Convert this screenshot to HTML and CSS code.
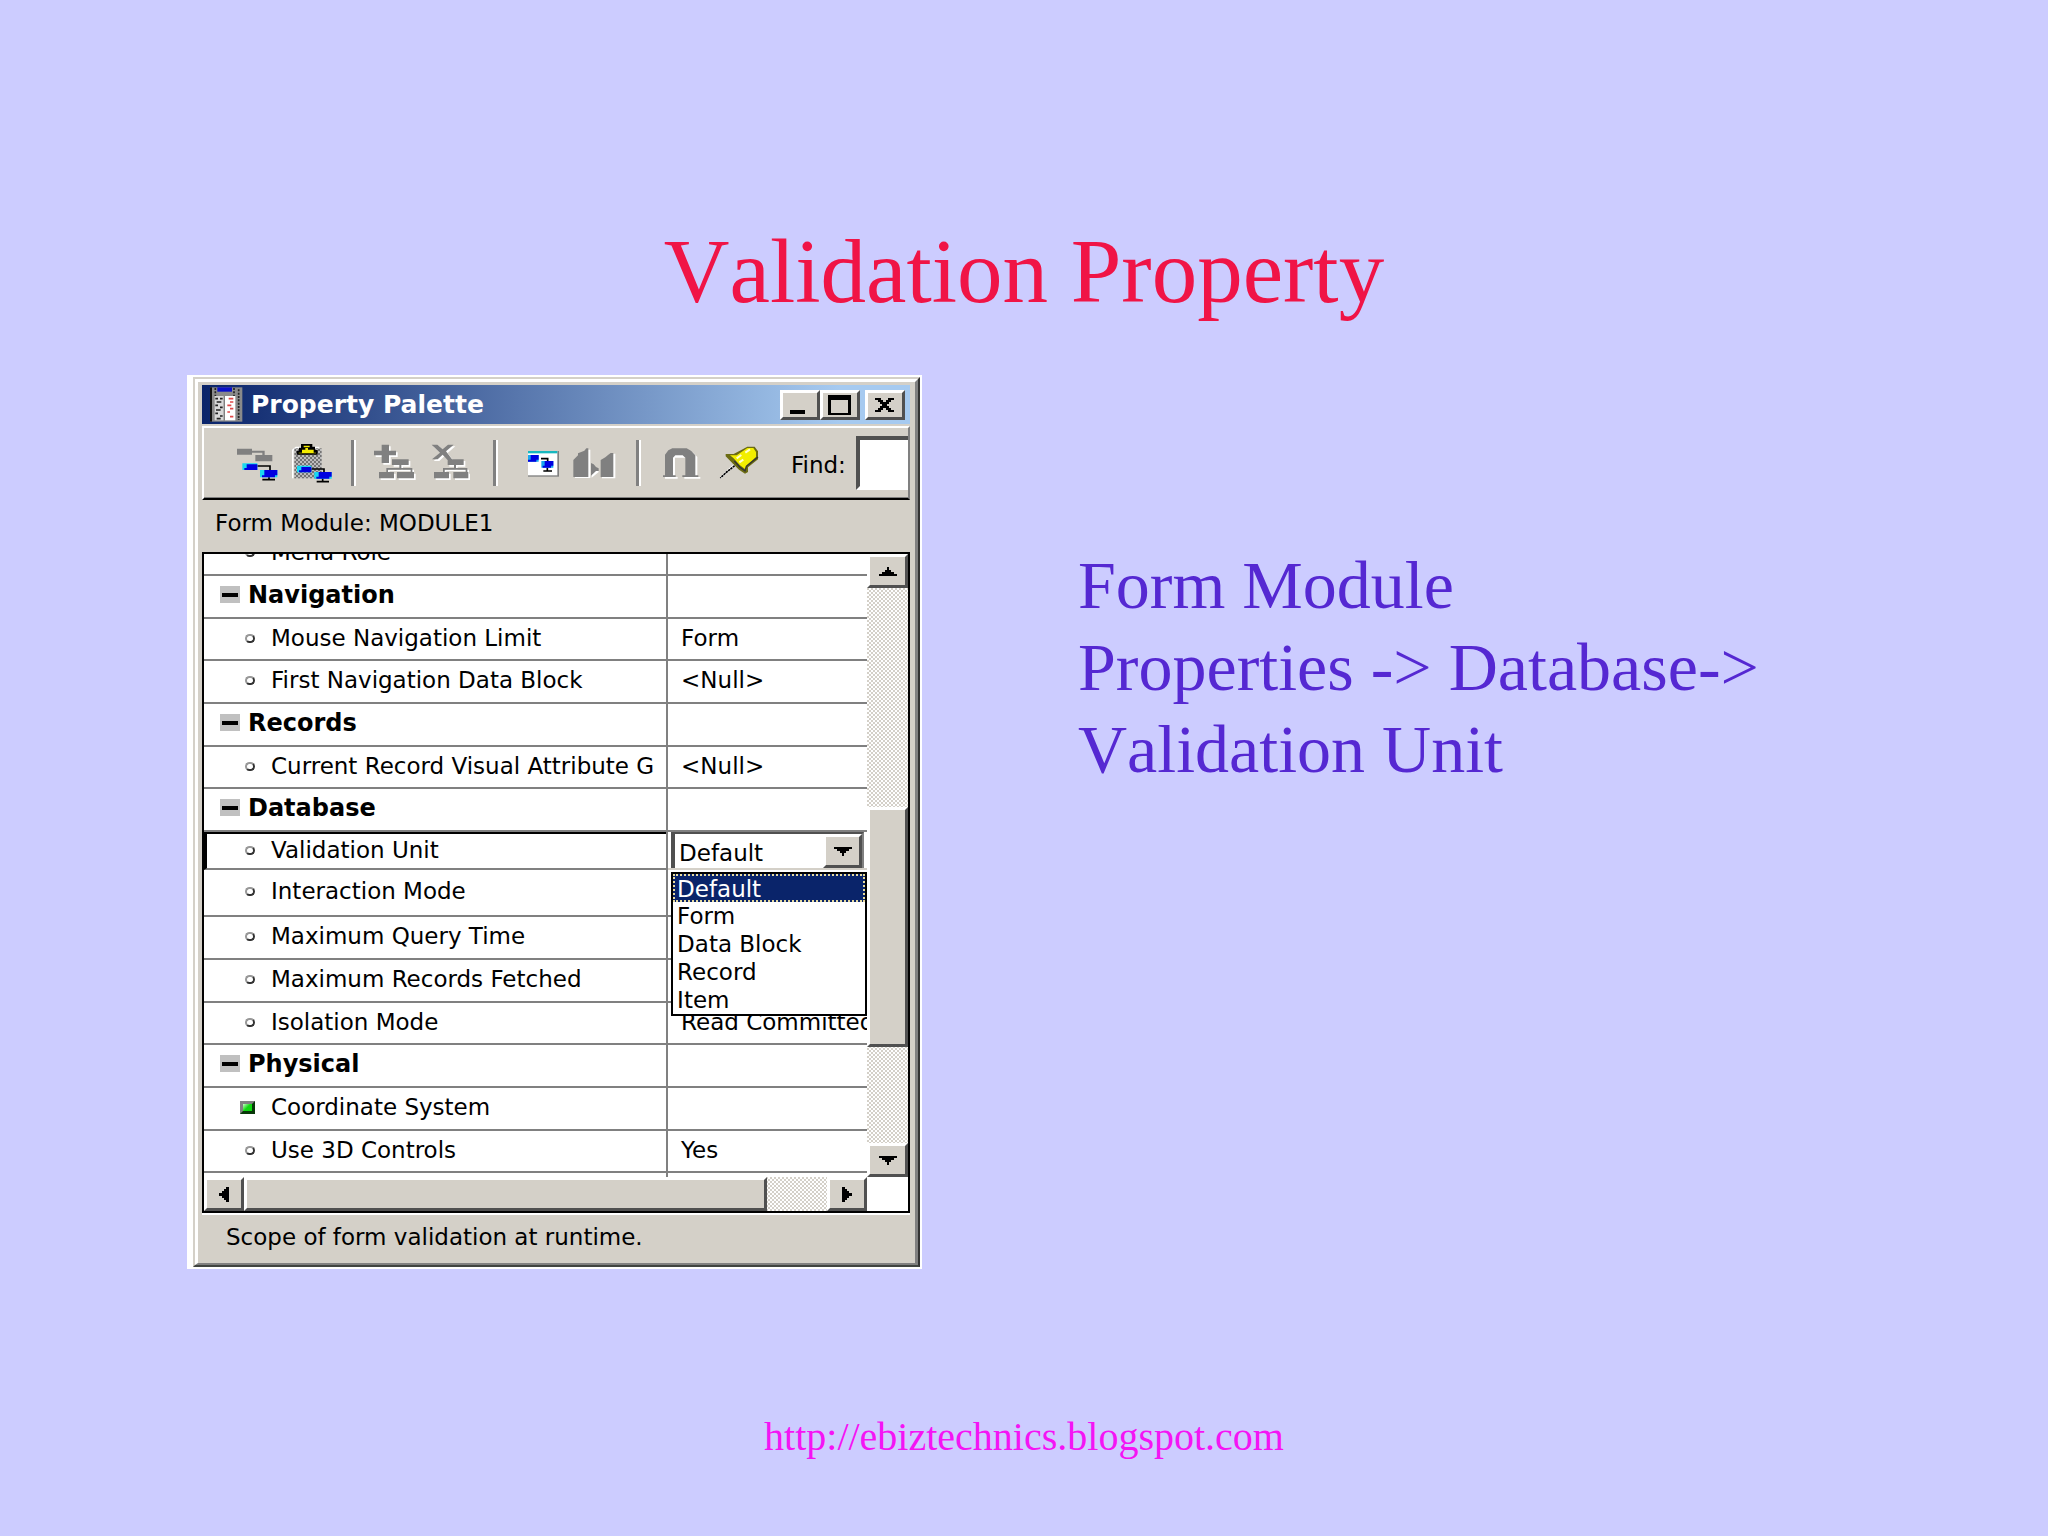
FILE: index.html
```html
<!DOCTYPE html>
<html lang="en">
<head>
<meta charset="utf-8">
<title>Validation Property</title>
<link rel="stylesheet" href="styles.css">
</head>
<body>
<div class="slide">
  <h1 class="slide-title">Validation Property</h1>

  <main class="slide-body">
    <section class="window" aria-label="Property Palette">
      <div class="frame">
        <div class="frame-inner">
          <header class="titlebar">
            <svg class="app-icon" width="33" height="35" viewBox="90 53 99 105" aria-hidden="true">
              <rect x="90" y="54" width="97" height="103" fill="#8a8a8a"/>
              <rect x="90" y="54" width="6" height="103" fill="#111"/>
              <rect x="112" y="54" width="44" height="13" fill="#0a10c8"/>
              <path d="M106 56v24M162 56v24M176 60v92" stroke="#222" stroke-width="5" stroke-dasharray="6 4"/>
              <rect x="104" y="80" width="27" height="73" fill="#d8d8d8"/>
              <rect x="134" y="80" width="32" height="73" fill="#fff"/>
              <path d="M106 88h8M120 88h8M110 98h14M106 108h8M120 114h8M108 122h14M106 132h8M120 140h8M110 148h12" stroke="#222" stroke-width="5"/>
              <path d="M146 88h14M150 98h10M142 108h12M150 118h10M142 128h8M150 142h10" stroke="#e04848" stroke-width="5"/>
              <path d="M133 80v73" stroke="#777" stroke-width="3"/>
            </svg>
            <h2 class="window-title">Property Palette</h2>
            <div class="window-buttons">
              <button class="win-btn" aria-label="Minimize"><svg width="30" height="20" viewBox="0 0 30 20"><path d="M5 15h15v4H5z"/></svg></button>
              <button class="win-btn" aria-label="Maximize"><svg width="30" height="20" viewBox="0 0 30 20"><path fill-rule="evenodd" d="M3 0h23v20H3zM6 5v13h17V5z"/></svg></button>
              <button class="win-btn win-close" aria-label="Close"><svg width="30" height="20" viewBox="0 0 30 20"><path d="M5 3h6v2h2v2h3V5h2V3h6v2h-3v2h-2v2h-2v2h2v2h2v2h3v2h-6v-2h-2v-2h-3v2h-2v2H5v-2h3v-2h2v-2h2V9h-2V7H8V5H5z"/></svg></button>
            </div>
          </header>

          <div class="toolbar" role="toolbar" aria-label="Properties">
            <button class="tool" aria-label="Copy properties">
              <svg width="42" height="46" viewBox="168 207 126 138">
                <path d="M171 233h45v6h38v13h23v19h-51v-19h21v-7h-31v6h-45z" fill="#808080"/>
                <path d="M232 285h38v13M267 318v8M247 326h38" stroke="#000" stroke-width="5" fill="none"/>
                <path d="M187 277h45v20h-45zM240 297h52v22h-52z" fill="#19d8f0"/>
                <path d="M200 280h32v17h-39v-6h7zM253 297h39v16h-7v6h-39v-6h7z" fill="#0000e0"/>
              </svg>
            </button>
            <button class="tool" aria-label="Paste properties">
              <svg width="41" height="46" viewBox="336 207 123 138">
                <defs><pattern id="board" width="12" height="12" patternUnits="userSpaceOnUse"><rect width="12" height="12" fill="#bcbcbc"/><path d="M0 0h6v6H0zM6 6h6v6H6z" fill="#747474"/></pattern></defs>
                <path d="M338 322v-84l10-8h70" stroke="#fff" stroke-width="5" fill="none"/>
                <rect x="343" y="232" width="82" height="90" fill="url(#board)"/>
                <path d="M363 219h34v8h8v10h8v14h-63v-12h7v-9h6z" fill="#000"/>
                <path d="M371 224h18v5h-18zM366 236h10v-5h8v5h17v9h7v2h-52v-2h10z" fill="#f4ec00"/>
                <path d="M394 294h38v10M428 322v10M410 332h37" stroke="#000" stroke-width="5" fill="none"/>
                <path d="M351 284h43v20h-43zM403 303h52v20h-52z" fill="#19d8f0"/>
                <path d="M364 288h30v16h-37v-6h7zM416 303h39v14h-7v6h-39v-6h7z" fill="#0000e0"/>
              </svg>
            </button>
            <span class="separator"></span>
            <button class="tool" aria-label="Add property">
              <svg width="43" height="46" viewBox="582 207 129 138">
                <path transform="translate(5 5)" fill="#fff" d="M605 221h22v18h21v14h-21v23h-22v-23h-23v-14h23zM636 265h50v17h-50zM658 282h6v9h33v12h-5v-7h-68v7h-5v-12h39zM597 303h45v19h-45zM651 303h51v19h-51z"/>
                <path fill="#808080" d="M605 221h22v18h21v14h-21v23h-22v-23h-23v-14h23zM636 265h50v17h-50zM658 282h6v9h33v12h-5v-7h-68v7h-5v-12h39zM597 303h45v19h-45zM651 303h51v19h-51z"/>
              </svg>
            </button>
            <button class="tool" aria-label="Delete property">
              <svg width="44" height="46" viewBox="753 207 132 138">
                <path transform="translate(5 5)" fill="#fff" d="M755 221h17l16 14 16-14h17l-23 20 18 24h35v17h-48v-14l-15-17-15 14h-17l24-20zM822 282h6v9h34v12h-5v-7h-63v7h-5v-12h33zM762 303h45v19h-45zM820 303h45v19h-45z"/>
                <path fill="#808080" d="M755 221h17l16 14 16-14h17l-23 20 18 24h35v17h-48v-14l-15-17-15 14h-17l24-20zM822 282h6v9h34v12h-5v-7h-63v7h-5v-12h33zM762 303h45v19h-45zM820 303h45v19h-45z"/>
              </svg>
            </button>
            <span class="separator"></span>
            <button class="tool" aria-label="Property palette view">
              <svg width="43" height="46" viewBox="1008 207 129 138">
                <rect x="1044" y="240" width="93" height="77" fill="#808080"/>
                <rect x="1044" y="240" width="88" height="73" fill="#fff"/>
                <rect x="1044" y="240" width="88" height="7" fill="#17b8c0"/>
                <path d="M1083 263h20v10M1102 290v10M1090 300h26" stroke="#000" stroke-width="5" fill="none"/>
                <path d="M1044 252h32v20h-32zM1084 270h36v20h-36z" fill="#19a8f0"/>
                <path d="M1052 252h24v14h-7v6h-25v-6h8zM1094 270h26v14h-7v6h-25v-6h6z" fill="#0000e0"/>
              </svg>
            </button>
            <button class="tool" aria-label="Intersection">
              <svg width="45" height="46" viewBox="69 207 135 138">
                <path fill="#fff" d="M75 270l39-34h7v85H75zM155 270l32-22h9v74h-40zM125 288l22 14-22 18z"/>
                <path fill="#808080" d="M70 267l14-14v-6l19-8 6-7h6v86H70zM152 267l14-8 8-7 8-6h8v72h-38zM123 276l8 4 7 8 8 4v8h-8l-15 14z"/>
              </svg>
            </button>
            <span class="separator"></span>
            <button class="tool" aria-label="Freeze">
              <svg width="43" height="46" viewBox="327 207 129 138">
                <path transform="translate(6 5)" fill="#fff" d="M339 313h6v-62l10-13 12-6h43l14 8 12 13v60h9v5h-48v-5h9v-58h-37v58h8v5h-38z"/>
                <path fill="#808080" d="M339 313h6v-62l10-13 12-6h43l14 8 12 13v60h9v5h-48v-5h9v-53l-8-7h-22l-7 7v53h8v5h-38z"/>
              </svg>
            </button>
            <button class="tool" aria-label="Pin palette">
              <svg width="43" height="46" viewBox="498 207 129 138">
                <path d="M556 280l-24 21-20 20" stroke="#fff" stroke-width="7"/>
                <path d="M554 284l-24 19-19 18" stroke="#000" stroke-width="5" stroke-dasharray="7 2"/>
                <path d="M578 235l14-8h22l10 14v24l-30 24v14l-9 5-18-12-18-18-22-22v-7h24z" fill="#6b6b12"/>
                <path d="M580 239l12-8h18l8 12v15l-28 25-4 12-16-12-20-22-10-8h20z" fill="#f2ee00"/>
                <path d="M586 245l14-10M560 262l14-10M568 274l12-8" stroke="#ffffd0" stroke-width="6"/>
                <path d="M553 270l16 18 16 12 4-14 35-28" stroke="#333" stroke-width="4" fill="none"/>
              </svg>
            </button>
            <label class="find-label" for="find">Find:</label>
            <input class="find-input" id="find" type="text">
          </div>

          <p class="context">Form Module: MODULE1</p>

          <div class="grid">
            <div class="viewport">
              <table class="properties">
                <colgroup><col class="col-name"><col></colgroup>
                <tbody>
                  <tr><th scope="row"><i class="dot"></i>Menu Role</th><td></td></tr>
                  <tr class="group"><th scope="row"><i class="minus"></i>Navigation</th><td></td></tr>
                  <tr><th scope="row"><i class="dot"></i>Mouse Navigation Limit</th><td>Form</td></tr>
                  <tr><th scope="row"><i class="dot"></i>First Navigation Data Block</th><td>&lt;Null&gt;</td></tr>
                  <tr class="group"><th scope="row"><i class="minus"></i>Records</th><td></td></tr>
                  <tr><th scope="row"><i class="dot"></i>Current Record Visual Attribute G</th><td>&lt;Null&gt;</td></tr>
                  <tr class="group"><th scope="row"><i class="minus"></i>Database</th><td></td></tr>
                  <tr class="editing">
                    <th scope="row"><i class="dot"></i><label for="unit">Validation Unit</label></th>
                    <td>
                      <div class="combo">
                        <select class="combo-value" id="unit"><option>Default</option></select>
                        <span class="combo-arrow"><svg width="18" height="9" viewBox="0 0 18 9"><path d="M0 0h18v2h-3v2h-3v2h-2v3H8V6H6V4H3V2H0z"/></svg></span>
                        <select class="combo-list" size="5" aria-label="Validation Unit choices">
                          <option selected>Default</option>
                          <option>Form</option>
                          <option>Data Block</option>
                          <option>Record</option>
                          <option>Item</option>
                        </select>
                      </div>
                    </td>
                  </tr>
                  <tr class="after-editing"><th scope="row"><i class="dot"></i>Interaction Mode</th><td></td></tr>
                  <tr><th scope="row"><i class="dot"></i>Maximum Query Time</th><td></td></tr>
                  <tr><th scope="row"><i class="dot"></i>Maximum Records Fetched</th><td></td></tr>
                  <tr><th scope="row"><i class="dot"></i>Isolation Mode</th><td>Read Committed</td></tr>
                  <tr class="group"><th scope="row"><i class="minus"></i>Physical</th><td></td></tr>
                  <tr><th scope="row"><i class="square"></i>Coordinate System</th><td></td></tr>
                  <tr><th scope="row"><i class="dot"></i>Use 3D Controls</th><td>Yes</td></tr>
                  <tr class="cut"><th></th><td></td></tr>
                </tbody>
              </table>
            </div>
            <div class="scroll scroll-v">
              <button class="scroll-btn" aria-label="Scroll up"><svg width="18" height="9" viewBox="0 0 18 9"><path d="M0 9h18V7h-3V5h-3V3h-2V0H8v3H6v2H3v2H0z"/></svg></button>
              <div class="track-above"></div>
              <div class="thumb"></div>
              <div class="track-below"></div>
              <button class="scroll-btn" aria-label="Scroll down"><svg width="18" height="9" viewBox="0 0 18 9"><path d="M0 0h18v2h-3v2h-3v2h-2v3H8V6H6V4H3V2H0z"/></svg></button>
            </div>
            <div class="scroll scroll-h">
              <button class="scroll-btn" aria-label="Scroll left"><svg width="10" height="15" viewBox="0 0 10 15"><path d="M10 0v15H7v-2H5v-2H3V9H0V6h3V4h2V2h2V0z"/></svg></button>
              <div class="thumb"></div>
              <div class="track-after"></div>
              <button class="scroll-btn" aria-label="Scroll right"><svg width="10" height="15" viewBox="0 0 10 15"><path d="M0 0v15h3v-2h2v-2h2V9h3V6H7V4H5V2H3V0z"/></svg></button>
            </div>
          </div>

          <p class="status">Scope of form validation at runtime.</p>
        </div>
      </div>
    </section>

    <p class="caption">Form Module<br>Properties -&gt; Database-&gt;<br>Validation Unit</p>
  </main>

  <footer class="slide-footer"><a href="http://ebiztechnics.blogspot.com">http://ebiztechnics.blogspot.com</a></footer>
</div>
</body>
</html>
```
FILE: styles.css
```css
* { box-sizing: border-box; }

body {
  margin: 0;
  background: #ccccff;
  font-family: "Liberation Serif", "Times New Roman", serif;
}

h1, h2, p { margin: 0; font-weight: normal; }

button, input, select {
  margin: 0;
  padding: 0;
  border: 0;
  border-radius: 0;
  color: #000;
  font: inherit;
}

svg { display: block; }

/* Slide */
.slide {
  display: flex;
  flex-direction: column;
  min-height: 100vh;
  padding: 220px 0 76px;
}

.slide-title {
  color: #f01446;
  font-size: 91px;
  line-height: 104px;
  text-align: center;
  font-kerning: none;
}

.slide-body {
  display: grid;
  grid-template-columns: minmax(0, 735fr) minmax(0, 783fr);
  gap: 156px;
  align-items: start;
  padding: 51px 187px 0;
}

.caption {
  padding-top: 169px;
  color: #5528d2;
  font-size: 68px;
  line-height: 82px;
  font-kerning: none;
}

.slide-footer {
  margin-top: auto;
  font-size: 40px;
  line-height: 46px;
  text-align: center;
}

.slide-footer a { color: #f414f4; text-decoration: none; }

/* Window frame */
.window {
  padding: 2px 2px 2px 6px;
  background: #fff;
  font-family: "DejaVu Sans", Verdana, sans-serif;
  font-size: 23px;
  line-height: 28px;
  color: #000;
}

.frame {
  border: 2px solid;
  border-color: #d4d0c8 #333 #404440 #d4d0c8;
}

.frame-inner {
  padding: 3px 5px 1px 4px;
  border: 3px solid;
  border-bottom-width: 2px;
  border-color: #fff #808080 #808080 #fff;
  background: #d4d0c8;
}

.titlebar {
  display: flex;
  align-items: center;
  height: 39px;
  padding: 0 5px 0 8px;
  background: linear-gradient(90deg, #0a246a, #a6caf0 90%);
}

.window-title {
  flex: 1;
  margin-left: 8px;
  color: #fff;
  font-size: 25px;
  font-weight: bold;
}

.window-buttons { display: flex; }

.win-btn, .scroll-btn, .thumb, .combo-arrow {
  background: #d4d0c8;
  border: 3px solid;
  border-color: #fff #505050 #505050 #fff;
}

.win-btn {
  display: flex;
  align-items: center;
  justify-content: center;
  width: 40px;
  height: 30px;
}

.win-close { margin-left: 5px; }

/* Toolbar */
.toolbar {
  display: flex;
  align-items: center;
  gap: 14px;
  height: 74px;
  margin-top: 2px;
  padding-left: 32px;
  border: 2px solid;
  border-color: #fff #808080 #000 #fff;
  box-shadow: inset 0 -1px #808080;
}

.tool { background: none; }

.separator {
  width: 5px;
  height: 46px;
  margin: 0 4px;
  border-left: 3px solid #808080;
  border-right: 2px solid #fff;
}

.find-label {
  margin-left: 18px;
  padding-top: 3px;
}

.find-input {
  flex: 1;
  min-width: 0;
  height: 54px;
  margin-left: -4px;
  border: 4px solid;
  border-color: #505050 #fff #fff #505050;
  border-right: 0;
  background: #fff;
}

.context {
  padding: 9px 12px 15px 13px;
}

.status {
  padding: 8px 24px 11px;
  border-top: 2px solid #fff;
}

/* Property grid */
.grid {
  display: grid;
  grid-template-columns: minmax(0, 1fr) 41px;
  border: 2px solid #000;
  background: #fff;
}

.viewport { overflow: hidden; }

.properties {
  width: 100%;
  margin-top: -21px;
  border-spacing: 0;
  table-layout: fixed;
}

.col-name { width: 70%; }

.properties tr { height: 43px; }
.properties tr:nth-child(3n) { height: 42px; }
.properties tr.editing { height: 38px; }
.properties tr.after-editing { height: 47px; }
.properties tr.cut { height: 4px; }

.properties th,
.properties td {
  overflow: hidden;
  padding: 0 0 3px 13px;
  border-bottom: 2px solid #808080;
  font-weight: normal;
  text-align: left;
  white-space: nowrap;
}

.properties th {
  padding-left: 41px;
  border-right: 2px solid #808080;
}

.properties .group th {
  padding-left: 16px;
  font-size: 24px;
  font-weight: bold;
}

.properties .cut th,
.properties .cut td { padding: 0; border-bottom: 0; line-height: 0; }

.dot, .minus, .square {
  display: inline-block;
  vertical-align: middle;
}

.dot {
  width: 10px;
  height: 9px;
  margin: 0 16px 2px 0;
  border: 2px solid;
  border-color: #999 #333 #333 #999;
  border-radius: 5px;
}

.minus {
  width: 20px;
  height: 17px;
  margin: 0 8px 3px 0;
  background: linear-gradient(#000, #000) center / 16px 4px no-repeat #c0c0c0;
}

.square {
  width: 15px;
  height: 13px;
  margin: 0 16px 3px -5px;
  border: 3px solid;
  border-color: #808080 #083808 #083808 #808080;
  background: linear-gradient(135deg, #c8ffc8, #10d810 50%);
}

/* Row being edited */
.properties .editing th {
  padding: 0 0 0 38px;
  border-left: 3px solid #000;
  box-shadow: inset 0 2px #000;
}

.properties .editing td {
  overflow: visible;
  padding: 0 3px;
  border-bottom-color: #d4d0c8;
}

.combo {
  position: relative;
  display: flex;
  height: 36px;
  border: 2px solid;
  border-width: 2px 2px 0 4px;
  border-color: #505050 #808080 #fff #505050;
}

.combo-value {
  flex: 1;
  min-width: 0;
  padding: 3px 0 0 4px;
  appearance: none;
  background: #fff;
}

.combo-arrow {
  display: flex;
  align-items: center;
  justify-content: center;
  width: 39px;
}

.combo-list {
  position: absolute;
  top: 38px;
  left: -4px;
  width: 196px;
  height: 144px;
  overflow: hidden;
  border: 2px solid #000;
  background: #fff;
  outline: 0;
  scrollbar-width: none;
}

.combo-list option {
  height: 28px;
  min-height: 28px;
  padding: 0 3px;
  border: 1px solid transparent;
  color: #000;
  line-height: 26px;
}

.combo-list option:checked {
  border: 2px dotted #e8dca0;
  padding: 0 2px;
  background: linear-gradient(#0a246a, #0a246a);
  color: #fff;
  line-height: 24px;
}

/* Scrollbars */
.scroll {
  display: flex;
  background: repeating-conic-gradient(#d4d0c8 0 25%, #fff 0 50%) 0 0 / 4px 4px;
}

.scroll-v { flex-direction: column; }

.scroll-btn {
  display: flex;
  align-items: center;
  justify-content: center;
  flex: none;
  width: 40px;
  height: 34px;
}

.scroll-v .scroll-btn { width: 100%; }

.track-above { flex: 221; }
.scroll-v .thumb { flex: 237; }
.track-below { flex: 97; }
.scroll-h .thumb { flex: 523; }
.track-after { flex: 61; }
```
